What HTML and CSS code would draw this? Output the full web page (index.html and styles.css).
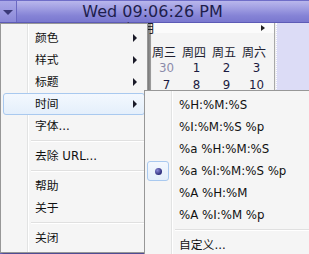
FILE: index.html
```html
<!DOCTYPE html>
<html>
<head>
<meta charset="utf-8">
<link rel="stylesheet" href="styles.css">
</head>
<body>
<div class="screen">
  <div class="bar">
    <div class="btn"><span class="tri"></span></div>
    <div class="title">Wed 09:06:26 PM</div>
  </div>
  <div class="panel">
    <div class="spacer"></div>
    <div class="cal">
      <div class="cal-head"><span class="month">2014年5月</span><span class="next"></span></div>
      <div class="grid">
        <span class="wd">周日</span><span class="wd">周一</span><span class="wd">周二</span><span class="wd">周三</span><span class="wd">周四</span><span class="wd">周五</span><span class="wd">周六</span>
        <span class="d dim">27</span><span class="d dim">28</span><span class="d dim">29</span><span class="d dim">30</span><span class="d">1</span><span class="d">2</span><span class="d">3</span>
        <span class="d">4</span><span class="d">5</span><span class="d">6</span><span class="d">7</span><span class="d">8</span><span class="d">9</span><span class="d">10</span>
      </div>
    </div>
    <div class="side"></div>
  </div>
  <div class="foot"></div>

  <div class="menu main">
    <div class="item sub">颜色</div>
    <div class="item sub">样式</div>
    <div class="item sub">标题</div>
    <div class="item sub hot">时间</div>
    <div class="item">字体...</div>
    <div class="sep"></div>
    <div class="item">去除 URL...</div>
    <div class="sep"></div>
    <div class="item">帮助</div>
    <div class="item">关于</div>
    <div class="sep"></div>
    <div class="item">关闭</div>
  </div>

  <div class="menu submenu">
    <div class="item">%H:%M:%S</div>
    <div class="item">%I:%M:%S %p</div>
    <div class="item">%a %H:%M:%S</div>
    <div class="item checked"><span class="mark"><span class="dot"></span></span>%a %I:%M:%S %p</div>
    <div class="item">%A %H:%M</div>
    <div class="item">%A %I:%M %p</div>
    <div class="sep"></div>
    <div class="item">自定义...</div>
  </div>
</div>
</body>
</html>
```

FILE: styles.css
```css
* { box-sizing: border-box; }
html, body { margin: 0; padding: 0; }
body {
  width: 309px;
  height: 254px;
  overflow: hidden;
  background: #f0f0f0;
  font-family: "DejaVu Sans", "Noto Sans CJK SC", sans-serif;
  font-size: 11.8px;
  color: #1b1b1b;
}
.screen {
  position: relative;
  width: 309px;
  height: 254px;
  display: flex;
  flex-direction: column;
  overflow: hidden;
}
.bar {
  height: 23px;
  flex: none;
  display: flex;
  align-items: center;
  border-top: 1px solid #6f6dc8;
  border-bottom: 1px solid #5d5bb6;
  background: linear-gradient(to bottom, #b9b7ec 0%, #a09ee2 35%, #8583d6 70%, #7a78cf 100%);
}
.btn {
  width: 17px;
  align-self: stretch;
  border-right: 1px solid #6a68c2;
  background: linear-gradient(to bottom, #aaa8e8, #8a88d8);
  display: flex;
  align-items: center;
  justify-content: center;
}
.tri {
  width: 0; height: 0;
  border-left: 5px solid transparent;
  border-right: 5px solid transparent;
  border-top: 5px solid #3b3a78;
  margin-top: 2px;
}
.title {
  flex: 1;
  text-align: center;
  font-family: "DejaVu Sans", sans-serif;
  font-size: 16px;
  line-height: 18px;
  color: #1e1e4c;
  padding-right: 21px;
  white-space: nowrap;
}
.panel {
  flex: 1;
  display: flex;
}
.spacer { width: 148px; flex: none; background: #f0f0f0; }
.cal {
  width: 127px;
  flex: none;
  background: #f4f4f4;
  border-left: 3px solid #a6a6a6;
  border-right: 1px solid #a8a8a8;
  position: relative;
}
.cal-head {
  height: 10px;
  display: flex;
  justify-content: space-between;
  align-items: center;
  padding-right: 9px;
  background: #fbfbfb;
}
.month {
  margin-left: -53px;
  font-family: "Noto Sans CJK SC", sans-serif;
  font-size: 12px;
  line-height: 10px;
  color: #202020;
  white-space: nowrap;
}
.next {
  width: 0; height: 0;
  border-top: 3px solid transparent;
  border-bottom: 3px solid transparent;
  border-left: 4px solid #202020;
}
.grid {
  display: grid;
  grid-template-columns: repeat(7, 30px);
  grid-auto-rows: 17px;
  margin-left: -92px;
  margin-top: 10px;
  width: 210px;
}
.wd {
  text-align: center;
  line-height: 17px;
  font-family: "Noto Sans CJK SC", sans-serif;
  font-size: 12px;
  color: #202030;
}
.d {
  text-align: center;
  line-height: 17px;
  padding-left: 5px;
  color: #1a1a40;
}
.d.dim { color: #8a8aaa; }
.side {
  flex: 1;
  background: #dcdcf6;
  border-left: 1px dotted #ffffff;
  margin-left: 1px;
}
.foot {
  height: 3px;
  flex: none;
  background: #6664c0;
}

.menu {
  position: absolute;
  background-color: #f5f5f5;
  border: 1px solid #979797;
  padding: 3px 2px;
  box-shadow: 2px 2px 2px rgba(0,0,0,0.25);
  background-image: linear-gradient(to right, transparent 26px, #e2e3e3 26px, #e2e3e3 27px, #ffffff 27px, #ffffff 28px, transparent 28px);
  background-origin: padding-box;
}
.main { left: 0; top: 23px; width: 148px; }
.submenu { left: 144px; top: 90px; width: 172px; }
.item {
  height: 22px;
  line-height: 22px;
  padding-left: 32px;
  position: relative;
  white-space: nowrap;
  color: #111;
}
.item.sub::after {
  content: "";
  position: absolute;
  right: 8px;
  top: 7px;
  border-top: 4px solid transparent;
  border-bottom: 4px solid transparent;
  border-left: 4px solid #1a1a28;
}
.item.hot {
  border: 1px solid #a9c9ef;
  border-radius: 3px;
  background: linear-gradient(to bottom, #f3f8fe, #e4effb);
  line-height: 20px;
  padding-left: 31px;
}
.item.hot::after { top: 6px; right: 7px; }
.sep {
  height: 8px;
  margin-left: 28px;
  position: relative;
}
.sep::before {
  content: "";
  position: absolute;
  left: 0; right: 0; top: 3px;
  border-top: 1px solid #e0e0e0;
  border-bottom: 1px solid #ffffff;
}
.mark {
  position: absolute;
  left: 0;
  top: 1px;
  width: 22px;
  height: 20px;
  border: 1px solid #a9c9ef;
  border-radius: 3px;
  background: linear-gradient(to bottom, #f3f8fe, #e4effb);
  display: flex;
  align-items: center;
  justify-content: center;
}
.dot {
  width: 7px;
  height: 7px;
  border-radius: 50%;
  background: radial-gradient(circle at 35% 35%, #8a8ad8, #2c2c7a 70%);
}
```
